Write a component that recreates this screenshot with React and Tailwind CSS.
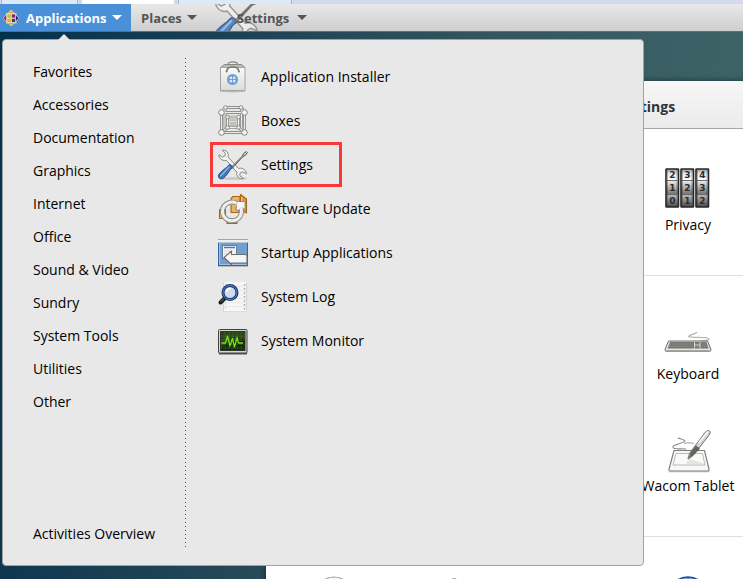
const categories = [
  "Favorites",
  "Accessories",
  "Documentation",
  "Graphics",
  "Internet",
  "Office",
  "Sound & Video",
  "Sundry",
  "System Tools",
  "Utilities",
  "Other",
];

function ToolsIcon({ className }) {
  return (
    <svg viewBox="0 0 32 32" className={className} aria-hidden="true">
      <ellipse cx="17" cy="29.5" rx="13" ry="1.6" fill="#000" opacity="0.12" />
      <path
        d="M5.2 1.2c2.600-.5 5.300 1 6 3.600.3 1.100.2 2.200-.2 3.100l10.600 11.600c1-.4 2.100-.5 3.200-.2 2.700.7 4.500 3.200 4.700 5.400l-4-1.900-2.500 1.300-.1 2.800 3.600 2.600c-2.500.9-5.400-.4-6.400-2.900-.5-1.200-.5-2.400-.2-3.400L9.400 11.300c-1 .4-2.200.4-3.300 0C3.400 10.500 1.600 8 1.800 5.600l3.700 2.500 2.600-1.300.2-2.700z"
        fill="#f2f2f0"
        stroke="#888a85"
        strokeWidth="1"
        strokeLinejoin="round"
      />
      <path d="M14 18.500 25.500 7l1-2.500 2.800-1.900 1 1-1.900 2.800-2.400 1L15 19.500z" fill="#d3d7cf" stroke="#555753" strokeWidth="1" strokeLinejoin="round" />
      <path
        d="M11.600 16.300c.8-.8 2-.7 2.900.2.900.8 1.100 2 .3 2.900-.8.9-1.700 1.300-2.300 2.300-1 1.800-3.300 5.200-6 7.400-1.400 1.100-3.300 1-4.300 0s-1.100-2.700-.1-4C4.200 22.300 7.500 20 9.300 18.700c1-.7 1.500-1.600 2.300-2.400z"
        fill="#3f76bd"
        stroke="#204a87"
        strokeWidth="1"
      />
      <path d="M12 18 3.800 26.700" stroke="#8fb8e8" strokeWidth="1.300" strokeLinecap="round" />
    </svg>
  );
}

function InstallerIcon() {
  return (
    <svg viewBox="0 0 32 32" className="size-8" aria-hidden="true">
      <defs>
        <linearGradient id="bag" x1="0" y1="0" x2="0" y2="1">
          <stop offset="0" stopColor="#fbfbfa" />
          <stop offset="1" stopColor="#d9dcd6" />
        </linearGradient>
      </defs>
      <ellipse cx="15.500" cy="30" rx="13.500" ry="1.500" fill="#000" opacity="0.2" />
      <path d="M3.500 6.500 7.500 3.500h17l3.500 3z" fill="#b9bcb6" stroke="#888a85" />
      <path d="M11 3.500c0-3.500 9.500-3.500 9.500 0" fill="none" stroke="#888a85" strokeWidth="1.300" />
      <path d="M3.500 6.500h24.500v23h-24.500z" fill="url(#bag)" stroke="#a3a5a0" />
      <path d="M10 10.500c-.5-2.500 1-4.500 5.700-4.500s6.300 2 5.800 4.500" fill="none" stroke="#777a74" strokeWidth="1.600" />
      <circle cx="9.500" cy="10.500" r="1" fill="#777a74" />
      <circle cx="22" cy="10.500" r="1" fill="#777a74" />
      <circle cx="15.500" cy="18.500" r="5.600" fill="#729fcf" />
      <rect x="12.700" y="15.700" width="2.300" height="2.300" fill="#dbe7f6" />
      <rect x="16" y="15.700" width="2.300" height="2.300" fill="#dbe7f6" />
      <rect x="12.700" y="19" width="2.300" height="2.300" fill="#dbe7f6" />
      <rect x="16" y="19" width="2.300" height="2.300" fill="#dbe7f6" />
    </svg>
  );
}

function BoxesIcon() {
  const frame = "M8 2.500h16.500M4.500 7.500h23v20h-23zM8 2.500l-3.500 5M24.500 2.500l3 5M8 2.500v20M24.500 2.500v20M4.500 27.500l6-5M27.500 27.500l-6-5";
  const outer = [[4.5, 7.5], [27.5, 7.5], [4.5, 27.5], [27.5, 27.5]];
  const inner = [[8.5, 2.500], [24, 2.500], [10.5, 12], [21.500, 12], [10.5, 22.500], [21.500, 22.500]];
  return (
    <svg viewBox="0 0 32 32" className="size-8" aria-hidden="true">
      <path d={frame} fill="none" stroke="#8d8f8a" strokeWidth="3" />
      <path d={frame} fill="none" stroke="#ecedea" strokeWidth="1.200" />
      <path d="M10.500 12h11v10.500h-11z" fill="#dcddda" stroke="#8d8f8a" strokeWidth="2.600" />
      <path d="M10.500 12h11v10.500h-11z" fill="none" stroke="#f2f2f0" strokeWidth="1" />
      <path d="M12.500 15h7M12.500 18h7M12.500 20h7" stroke="#a4a6a1" />
      {inner.map(([x, y]) => (
        <circle key={`${x}-${y}`} cx={x} cy={y} r="1.800" fill="#f4f4f2" stroke="#858782" strokeWidth="0.900" />
      ))}
      {outer.map(([x, y]) => (
        <circle key={`${x}-${y}`} cx={x} cy={y} r="2.800" fill="#f4f4f2" stroke="#858782" />
      ))}
    </svg>
  );
}

function UpdateIcon() {
  const ring = "M19.500 10.200C17.500 9 14.500 8.800 12 9.700 8 11.200 5.500 14.500 5.500 18.500c0 5.300 4.200 9.300 9.500 9.300 5.500 0 9.500-4.200 9.500-9.500 0-1.500-.3-2.800-.8-4";
  return (
    <svg viewBox="0 0 32 32" className="size-8" aria-hidden="true">
      <g fill="#e9b36c" stroke="#a9640f" strokeWidth="1.100" strokeLinejoin="round">
        <path d="M2.500 16.500h6v9h-6z" />
        <path d="M10 25.500h10v5H10z" />
        <path d="M14 5.500 16 3.500h7v16h-9z" />
        <path d="M23.500 1.500 29.500 6v14l-6-3z" fill="#d99645" />
      </g>
      <path d="M16 5.500v6M24.700 4v6" stroke="#f6d6a4" strokeWidth="1" />
      <path d={ring} fill="none" stroke="#8b8d88" strokeWidth="5" />
      <path d="M28 8.500h-9l2.500 3-3 4 2.500 2.500 4-3.500 3 2.500z" fill="#f7f7f6" stroke="#8b8d88" strokeWidth="1.100" strokeLinejoin="round" />
      <path d={ring} fill="none" stroke="#eeeeec" strokeWidth="3" />
      <path d="M20 9.300h7.200v6.500l-2.500-2-4.500 3" fill="#f7f7f6" />
    </svg>
  );
}

function StartupIcon() {
  return (
    <svg viewBox="0 0 32 32" className="size-8" aria-hidden="true">
      <rect x="1" y="28" width="30" height="2" fill="#000" opacity="0.2" />
      <rect x="1.500" y="2.500" width="29" height="26" fill="#729fcf" stroke="#3465a4" />
      <rect x="1" y="2" width="30" height="3.500" fill="#eeeeec" />
      <path d="M1 2.500h30" stroke="#a5a69b" />
      <path d="M2.500 6v21.500h27" fill="none" stroke="#9fc0e6" />
      <rect x="5.500" y="8.500" width="14" height="13" fill="#f3f3f3" stroke="#667d99" />
      <path d="M7 10.500h11" stroke="#4a78b2" strokeWidth="1.500" />
      <path d="M7 14h9M7 17h5" stroke="#cfd3d8" />
      <path d="M7 20.500 14.500 14v3.500H28c1.200 0 2 .8 2 2V26H14.500v1.500z" fill="#f5f5f4" stroke="#6d6f6a" strokeWidth="1.100" strokeLinejoin="round" />
    </svg>
  );
}

function LogIcon() {
  return (
    <svg viewBox="0 0 32 32" className="size-8" aria-hidden="true">
      <rect x="6" y="1.500" width="24" height="29" fill="#d4d4d3" />
      <rect x="7" y="1" width="22" height="29" fill="#f7f7f6" />
      <path d="M7 5.500h22M7 9.500h22M7 13.500h22M7 17.500h22M7 21.500h22M7 25.500h22" stroke="#e9eae8" strokeWidth="1.500" />
      <path d="M8.500 2v28" stroke="#ccc" strokeDasharray="1.500 2.500" />
      <path d="M27.500 3v27" stroke="#a5a7a2" strokeWidth="1.500" strokeDasharray="1.500 2.500" />
      <path d="M8 17 3.500 21.500" stroke="#1c1e1d" strokeWidth="4" strokeLinecap="round" />
      <path d="M7 17.500 4 20.500" stroke="#888a85" strokeWidth="1" />
      <circle cx="13" cy="11.500" r="7" fill="#cfdcec" stroke="#1b3574" strokeWidth="3" />
      <circle cx="13" cy="11.500" r="7" fill="none" stroke="#5b82c8" strokeWidth="1" />
      <path d="M9.500 10.500c.5-2 2-3 4-3" fill="none" stroke="#fff" strokeWidth="1.600" strokeLinecap="round" />
    </svg>
  );
}

function MonitorIcon() {
  return (
    <svg viewBox="0 0 32 32" className="size-8" aria-hidden="true">
      <path d="M2 27h28v2.500H2z" fill="#555753" />
      <rect x="1.500" y="4.500" width="28.500" height="23.500" rx="1" fill="#d3d7cf" stroke="#41433f" />
      <rect x="3.500" y="6.500" width="24.500" height="19" fill="#16240b" stroke="#2e3430" />
      <path d="M4 7h24v7C18 14 10 17 4 23z" fill="#53743a" opacity="0.400" />
      <path d="M8 7v18M12 7v18M16 7v18M20 7v18M24 7v18M4 11h24M4 15h24M4 19h24M4 23h24" stroke="#4b8820" strokeWidth="0.700" strokeDasharray="1 1" />
      <path d="M4.500 18H8.500l2-7 2.500 10 2.500-7.500 2 8.500 2.500-9.500 1.500 5.500H26" fill="none" stroke="#73e01c" strokeWidth="1.300" strokeLinejoin="round" />
    </svg>
  );
}

const applications = [
  { name: "Application Installer", Icon: InstallerIcon },
  { name: "Boxes", Icon: BoxesIcon },
  { name: "Settings", Icon: () => <ToolsIcon className="size-8" />, marked: true },
  { name: "Software Update", Icon: UpdateIcon },
  { name: "Startup Applications", Icon: StartupIcon },
  { name: "System Log", Icon: LogIcon },
  { name: "System Monitor", Icon: MonitorIcon },
];

function PrivacyIcon() {
  const rolls = [
    { x: 2, digits: ["2", "1", "0"] },
    { x: 17, digits: ["3", "2", "1"] },
    { x: 32, digits: ["4", "3", "2"] },
  ];
  return (
    <svg viewBox="0 0 48 48" className="size-12" aria-hidden="true">
      <defs>
        <linearGradient id="roll" x1="0" y1="0" x2="0" y2="1">
          <stop offset="0" stopColor="#9a9a9a" />
          <stop offset="0.120" stopColor="#e6e6e6" />
          <stop offset="0.290" stopColor="#ffffff" />
          <stop offset="0.340" stopColor="#e2e2e2" />
          <stop offset="0.640" stopColor="#787878" />
          <stop offset="0.700" stopColor="#b5b5b5" />
          <stop offset="1" stopColor="#4a4a4a" />
        </linearGradient>
      </defs>
      {rolls.map(({ x, digits }) => (
        <g key={x}>
          <rect x={x} y="5" width="12.500" height="38" rx="0.500" fill="url(#roll)" stroke="#262626" strokeWidth="1.600" />
          <path d={`M${x + 1} 16.500h10.500M${x + 1} 30.500h10.500`} stroke="#6a6a6a" />
          <path d={`M${x + 1.5} 6v36M${x + 11} 6v36`} stroke="#333" opacity="0.350" />
          {digits.map((digit, i) => (
            <text
              key={digit}
              x={x + 6.5}
              y={[14, 27, 40][i]}
              textAnchor="middle"
              className="fill-[#2c2c2c] font-['DejaVu_Sans',sans-serif] text-[9px] font-bold"
            >
              {digit}
            </text>
          ))}
        </g>
      ))}
    </svg>
  );
}

function KeyboardIcon() {
  return (
    <svg viewBox="0 0 48 48" className="size-12" aria-hidden="true">
      <path d="M32.500 19c1 1.500-6.500 2.500-8 4.500 3 2 20-.5 20.500 2.500.3 2-8 1-10 2.500" fill="none" stroke="#b4b6b2" strokeWidth="1.200" />
      <rect x="1" y="37" width="46" height="2" rx="1" fill="#000" opacity="0.200" />
      <path d="M4.500 28h39l3.500 8.500c0 1-.5 1.500-1.500 1.500h-43C1.500 38 1 37.500 1 36.500z" fill="#e3e4e1" stroke="#686a66" strokeLinejoin="round" />
      <path d="M6 29h36.500l2 6.500H3.700z" fill="#74776f" />
      <path d="M5.500 31h37M5 33.300h38.500" stroke="#9a9c96" strokeWidth="0.800" strokeDasharray="1.500 1" />
      <path d="M30.500 29v6.500M36 29v6.500M31 32h5" stroke="#d0d2cd" strokeWidth="1" />
    </svg>
  );
}

function TabletIcon() {
  return (
    <svg viewBox="0 0 48 48" className="size-12" aria-hidden="true">
      <path d="M14 13c2.500 1 6 1.500 7 3-2 2.500-13 3.500-12 6.500 1.500 3 12 0 13 2" fill="none" stroke="#888a85" strokeWidth="1.100" />
      <path d="M20 18.500c3-1 7-.8 10 0" fill="none" stroke="#a0a29d" />
      <rect x="4.500" y="45" width="41" height="2.500" rx="1" fill="#000" opacity="0.150" />
      <path d="M10 25.500h30.500L45 44c.2 1.500-.5 2-1.500 2H6.500c-1.200 0-1.700-.7-1.500-2z" fill="#f7f7f6" stroke="#7d7f7b" strokeWidth="1.200" />
      <path d="M12 28.500h26.500L41 40H9z" fill="#fafafa" stroke="#b8bab6" />
      <path d="M24.500 33.500 41 39H22z" fill="#e4e5e3" />
      <path d="M24 34c.3-2.500 1-5 2.500-7L41.500 7c1.200-1.600 3-2 4-1s.8 2.700-.5 4.200L29.500 30c-1.500 1.800-3.500 3-5.500 4z" fill="#d3d5d1" stroke="#70726e" />
      <path d="M26.500 27.500 32 20.500l4 3.200-6.500 6.500-4.500 3z" fill="#62645f" />
      <path d="M35 17.500 43.500 7" stroke="#fafafa" strokeWidth="1.600" strokeLinecap="round" />
    </svg>
  );
}

function RingIcon({ blue }) {
  return (
    <svg viewBox="0 0 48 48" className="size-12" aria-hidden="true">
      <circle cx="24" cy="22" r="19" fill={blue ? "#7ba7dc" : "#f4f4f3"} stroke={blue ? "#1f4788" : "#9a9c98"} strokeWidth={blue ? 1.6 : 1.2} />
    </svg>
  );
}

function SharingIcon() {
  return (
    <svg viewBox="0 0 48 48" className="size-12" aria-hidden="true">
      <path d="M17 5h4l1 4h-6zM24 4h4l3 5h-6z" fill="#b5b7b3" />
    </svg>
  );
}

function Tile({ label, children, className }) {
  return (
    <button type="button" className={`flex flex-col items-center gap-[3px] whitespace-nowrap text-sm text-black ${className ?? ""}`}>
      {children}
      {label && <span>{label}</span>}
    </button>
  );
}

function Arrow() {
  return (
    <svg viewBox="0 0 10 5" className="h-[5px] w-2.5" aria-hidden="true">
      <path d="M0 0h10L5 5z" fill="currentColor" />
    </svg>
  );
}

function Logo() {
  const squares = [
    ["#9ccd2a", "M4 4h4v4H4z"],
    ["#932279", "M8.500 4h4v4h-4z"],
    ["#3a3a86", "M8.500 8.500h4v4h-4z"],
    ["#efa724", "M4 8.500h4v4H4z"],
    ["#efa724", "M8.200 0l3.500 3.500H4.700z"],
    ["#262577", "M16 8.200l-3.500 3.500v-7z"],
    ["#9ccd2a", "M8.200 16l-3.500-3.500h7z"],
    ["#932279", "M0 8.200l3.500-3.500v7z"],
  ];
  return (
    <svg viewBox="0 0 16 16" className="size-4" aria-hidden="true">
      <path d="M8.200 0 11 3h2.500v2.500L16 8.200 13.500 11v2.500H11L8.200 16 5.500 13.500H3V11L0 8.200 3 5.500V3h2.500z" fill="#e8cfa0" />
      {squares.map(([fill, d]) => (
        <path key={d} d={d} fill={fill} stroke="#f3e3c4" strokeWidth="0.600" />
      ))}
    </svg>
  );
}

function SettingsWindow() {
  return (
    <section aria-label="All Settings" className="absolute top-[81px] -bottom-20 left-[266px] w-[740px] bg-white shadow-[0_0_6px_#00000080]">
      <header className="flex h-12 items-center justify-center border-b border-[#a6a6a6] bg-linear-to-b from-[#f7f7f7] to-[#ebebeb]">
        <h1 className="pt-1 text-sm font-bold text-[#2e3436]">All Settings</h1>
      </header>
      <div className="grid grid-cols-[repeat(6,118px)] border-b border-[#dedede] pt-[35px] pb-10 pl-[9px]">
        <Tile label="Privacy" className="col-start-4">
          <PrivacyIcon />
        </Tile>
      </div>
      <div className="grid grid-cols-[repeat(6,118px)] gap-y-[41px] border-b border-[#dedede] pt-[37px] pb-10 pl-[9px]">
        <Tile label="Keyboard" className="col-start-4">
          <KeyboardIcon />
        </Tile>
        <Tile label="Wacom Tablet" className="col-start-4">
          <TabletIcon />
        </Tile>
      </div>
      <h2 className="pt-2.5 pl-[15px] text-sm font-bold text-[#2e3436]">System</h2>
      <div className="grid grid-cols-[repeat(6,118px)] pt-[7px] pl-[9px]">
        <Tile>
          <RingIcon />
        </Tile>
        <Tile>
          <SharingIcon />
        </Tile>
        <Tile className="col-start-4">
          <RingIcon blue />
        </Tile>
      </div>
    </section>
  );
}

function ApplicationsMenu() {
  return (
    <div className="absolute top-[39px] left-0.5 flex w-[642px] rounded-[4px] border border-[#a1a1a1] bg-[#e8e8e8] pt-[15px] pb-[15px] text-sm text-black">
      <svg viewBox="0 0 12 6" className="absolute -top-1.5 left-[55px] h-1.5 w-3" aria-hidden="true">
        <path d="M0 6 6 0l6 6z" fill="#e8e8e8" />
      </svg>
      <nav aria-label="Categories" className="flex w-[182px] flex-col">
        {categories.map((name) => (
          <button key={name} type="button" className="h-[33px] pl-[30px] text-left">
            {name}
          </button>
        ))}
        <button type="button" className="mt-[99px] h-[33px] pl-[30px] text-left">
          Activities Overview
        </button>
      </nav>
      <div className="mt-[3px] mb-[3px] w-px bg-[repeating-linear-gradient(to_bottom,#555_0,#555_1px,transparent_1px,transparent_4px)]" />
      <ul className="flex-1 pl-6">
        {applications.map(({ name, Icon, marked }) => (
          <li key={name} className="relative">
            <button type="button" className="flex h-11 w-full items-center gap-3 pl-[7px] text-left">
              <Icon />
              {name}
            </button>
            {marked && <span className="pointer-events-none absolute -top-px left-0 h-[45px] w-[132px] border-3 border-[#fb3838]" />}
          </li>
        ))}
      </ul>
    </div>
  );
}

export default function App() {
  return (
    <div className="relative flex min-h-screen flex-col overflow-hidden bg-[linear-gradient(100deg,#04304c_0%,#1d4254_30%,#35565f_60%,#3f686a_100%)] font-['Open_Sans','Noto_Sans',sans-serif]">
      <div className="flex h-1 gap-1 bg-[#d3daee] pl-px">
        <span className="w-[77px] border-x border-[#a3b8d6] bg-[#dce9f7]" />
        <span className="w-[92px] bg-white" />
        <span className="w-[114px] border-x border-[#a3b8d6] bg-[#dce9f7]" />
      </div>
      <div className="flex h-7 border-b border-[#6c6c6c] bg-linear-to-b from-[#e8e8e8] to-[#cecece] text-[13px] font-bold text-[#555]">
        <button type="button" className="flex w-[131px] items-center gap-[5px] bg-[#4a90d9] pl-[3px] text-white">
          <Logo />
          <span className="pt-0.5 pl-0.5">Applications</span>
          <Arrow />
        </button>
        <button type="button" className="flex items-center gap-[5px] pl-2.5">
          <span className="pt-0.5">Places</span>
          <Arrow />
        </button>
        <button type="button" className="relative ml-4 flex items-center gap-2 overflow-hidden pl-6">
          <ToolsIcon className="absolute -top-2.5 left-0 size-12 opacity-80" />
          <span className="relative pt-0.5">Settings</span>
          <Arrow />
        </button>
      </div>
      <SettingsWindow />
      <ApplicationsMenu />
    </div>
  );
}
